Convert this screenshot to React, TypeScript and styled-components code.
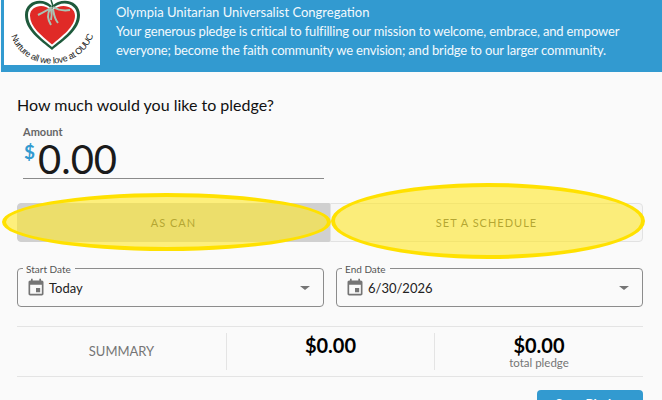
import React from "react";
import styled, { createGlobalStyle } from "styled-components";

const GlobalStyle = createGlobalStyle`
  html, body {
    margin: 0;
    padding: 0;
    background: #fafafa;
  }
  * {
    box-sizing: border-box;
  }
`;

const Page = styled.div`
  position: relative;
  width: 662px;
  height: 400px;
  overflow: hidden;
  background: #fafafa;
  font-family: Lato, "Open Sans", sans-serif;
  color: #111;
`;

const Header = styled.header`
  display: flex;
  height: 72px;
  margin-left: 1px;
  padding-left: 3px;
  background: #329ad0;
`;

const LogoBox = styled.div`
  flex: none;
  width: 96px;
  height: 65px;
  overflow: hidden;
  background: #fff;
`;

const HeaderText = styled.div`
  flex: 1;
  padding: 3px 20px 0 16px;
  font-size: 13px;
  line-height: 19px;
  color: #f2f9fd;
`;

const HeaderMission = styled.span`
  letter-spacing: -0.16px;
`;

const Body = styled.main`
  padding: 23px 19px 0 17px;
`;

const Question = styled.h2`
  margin: 0;
  font-size: 16px;
  font-weight: 400;
  line-height: 20px;
  color: #111;
`;

const AmountField = styled.div`
  width: 301px;
  height: 54px;
  margin: 10px 0 24px 6px;
  border-bottom: 1px solid #8a8a8a;
`;

const AmountLabel = styled.div`
  height: 13px;
  font-size: 11px;
  font-weight: 700;
  line-height: 13px;
  color: #666;
`;

const AmountRow = styled.div`
  display: flex;
  align-items: flex-start;
  height: 38px;
  margin-top: 2px;
`;

const Dollar = styled.span`
  width: 15px;
  padding-left: 1px;
  margin-top: 1px;
  font-size: 19px;
  font-weight: 700;
  line-height: 22px;
  color: #329ad0;
`;

const AmountValue = styled.span`
  font-size: 40px;
  line-height: 38px;
  color: #1a1a1a;
`;

const Toggle = styled.div`
  display: grid;
  grid-template-columns: 313px 313px;
  height: 39px;
`;

const ToggleButton = styled.div<{ $active?: boolean }>`
  display: flex;
  align-items: center;
  justify-content: center;
  font-size: 11px;
  letter-spacing: 1px;
  color: #444;
  background: ${(p) => (p.$active ? "#d0d0d0" : "#f6f6f6")};
  border: 1px solid ${(p) => (p.$active ? "#d0d0d0" : "#e2e2e2")};
  border-radius: ${(p) => (p.$active ? "4px 0 0 4px" : "0 4px 4px 0")};
`;

const DateRow = styled.div`
  display: grid;
  grid-template-columns: 307px 307px;
  column-gap: 12px;
  margin-top: 26px;
`;

const DateField = styled.div`
  position: relative;
  display: flex;
  align-items: center;
  height: 39px;
  padding: 0 13px 0 8px;
  border: 1px solid #8c8c8c;
  border-radius: 4px;
`;

const DateLegend = styled.span`
  position: absolute;
  top: -5px;
  left: 5px;
  padding: 0 4px 0 3px;
  font-size: 10px;
  line-height: 10px;
  color: #555;
  background: #fafafa;
`;

const DateValue = styled.span`
  flex: 1;
  margin-left: 3px;
  font-size: 13px;
  color: #222;
`;

const Caret = styled.span`
  width: 0;
  height: 0;
  border-left: 5px solid transparent;
  border-right: 5px solid transparent;
  border-top: 4px solid #757575;
`;

const Summary = styled.section`
  display: grid;
  grid-template-columns: 209px 208px 209px;
  height: 51px;
  margin-top: 19px;
  padding: 6px 0;
  border-top: 1px solid #e4e4e4;
  border-bottom: 1px solid #e4e4e4;
`;

const SummaryCell = styled.div<{ $divider?: boolean }>`
  display: flex;
  flex-direction: column;
  align-items: center;
  border-left: ${(p) => (p.$divider ? "1px solid #e4e4e4" : "none")};
`;

const SummaryTitle = styled.span`
  margin-top: 10px;
  font-size: 13px;
  color: #757575;
`;

const SummaryAmount = styled.span`
  font-size: 20px;
  font-weight: 700;
  line-height: 24px;
  color: #000;
`;

const SummaryNote = styled.span`
  font-size: 11.500px;
  line-height: 12px;
  color: #757575;
`;

const Actions = styled.div`
  display: flex;
  justify-content: flex-end;
  margin-top: 13px;
`;

const SaveButton = styled.button`
  width: 106px;
  height: 36px;
  padding: 0 0 9px;
  border: none;
  border-radius: 4px;
  font-family: inherit;
  font-size: 13px;
  font-weight: 700;
  color: #fff;
  background: #329ad0;
`;

const Highlight = styled.div<{ $x: number; $y: number; $w: number; $h: number }>`
  position: absolute;
  left: ${(p) => p.$x}px;
  top: ${(p) => p.$y}px;
  width: ${(p) => p.$w}px;
  height: ${(p) => p.$h}px;
  border: 4px solid #ffe100;
  border-radius: 50%;
  background: rgba(255, 232, 40, 0.6);
`;

const CalendarIcon = () => (
  <svg width="20" height="20" viewBox="0 0 24 24" fill="#757575">
    <path d="M17 12h-5v5h5v-5zM16 1v2H8V1H6v2H5c-1.11 0-1.99.9-1.99 2L3 19c0 1.1.89 2 2 2h14c1.1 0 2-.9 2-2V5c0-1.1-.9-2-2-2h-1V1h-2zm3 18H5V8h14v11z" />
  </svg>
);

const Logo = () => (
  <svg width="96" height="65" viewBox="0 0 96 65">
    <path
      d="M48 50 C36 40 21 30 21 15 C21 3 33 -2 42 2 C45 3.500 47 5 48 6 C49 5 51 3.500 54 2 C64 -2 76 3 76 15 C76 30 60 40 48 50Z"
      fill="#1f5a3c"
    />
    <path
      d="M48 47 C37 38 24 28 24 15 C24 6 34 1 42 5 C45 6.500 47 8 48 9 C49 8 51 6.500 54 5 C63 1 73 6 73 15 C73 28 59 38 48 47Z"
      fill="#fff"
    />
    <path
      d="M48 44.500 C38 36 26 27 26 15.500 C26 8 35 4 42 7 C45 8.500 47 9.500 48 10 C49 9.500 51 8.500 54 7 C62 4 71 8 71 15.500 C71 27 58 36 48 44.500Z"
      fill="#e02a27"
    />
    <path
      d="M48 7 C44 10 40 12 34 15 M49 7 C54 10 60 11 66 10 M46 9 C43 14 44 20 47 25 M49 9 C50 14 50 18 54 23 M47 9 C48 13 48 16 47 20"
      stroke="#a9c4b4"
      strokeWidth="2"
      fill="none"
    />
    <path d="M47 0 L49 6" stroke="#1f5a3c" strokeWidth="1.500" />
    <defs>
      <path id="logo-arc" d="M7 36 C20 73 76 73 90 34" />
    </defs>
    <text fontFamily="'Liberation Sans', sans-serif" fontSize="9" fill="#222">
      <textPath href="#logo-arc" textLength="106">
        Nurture all we love at OUUC
      </textPath>
    </text>
  </svg>
);

const App: React.FC = () => {
  return (
    <Page>
      <GlobalStyle />
      <Header>
        <LogoBox>
          <Logo />
        </LogoBox>
        <HeaderText>
          Olympia Unitarian Universalist Congregation
          <br />
          <HeaderMission>
            Your generous pledge is critical to fulfilling our mission to welcome, embrace, and empower
            everyone; become the faith community we envision; and bridge to our larger community.
          </HeaderMission>
        </HeaderText>
      </Header>
      <Body>
        <Question>How much would you like to pledge?</Question>
        <AmountField>
          <AmountLabel>Amount</AmountLabel>
          <AmountRow>
            <Dollar>$</Dollar>
            <AmountValue>0.00</AmountValue>
          </AmountRow>
        </AmountField>
        <Toggle>
          <ToggleButton $active>AS CAN</ToggleButton>
          <ToggleButton>SET A SCHEDULE</ToggleButton>
        </Toggle>
        <DateRow>
          <DateField>
            <DateLegend>Start Date</DateLegend>
            <CalendarIcon />
            <DateValue>Today</DateValue>
            <Caret />
          </DateField>
          <DateField>
            <DateLegend>End Date</DateLegend>
            <CalendarIcon />
            <DateValue>6/30/2026</DateValue>
            <Caret />
          </DateField>
        </DateRow>
        <Summary>
          <SummaryCell>
            <SummaryTitle>SUMMARY</SummaryTitle>
          </SummaryCell>
          <SummaryCell $divider>
            <SummaryAmount>$0.00</SummaryAmount>
          </SummaryCell>
          <SummaryCell $divider>
            <SummaryAmount>$0.00</SummaryAmount>
            <SummaryNote>total pledge</SummaryNote>
          </SummaryCell>
        </Summary>
        <Actions>
          <SaveButton>Save Pledge</SaveButton>
        </Actions>
      </Body>
      <Highlight $x={2} $y={193} $w={329} $h={58} />
      <Highlight $x={331} $y={183} $w={314} $h={76} />
    </Page>
  );
};

export default App;
